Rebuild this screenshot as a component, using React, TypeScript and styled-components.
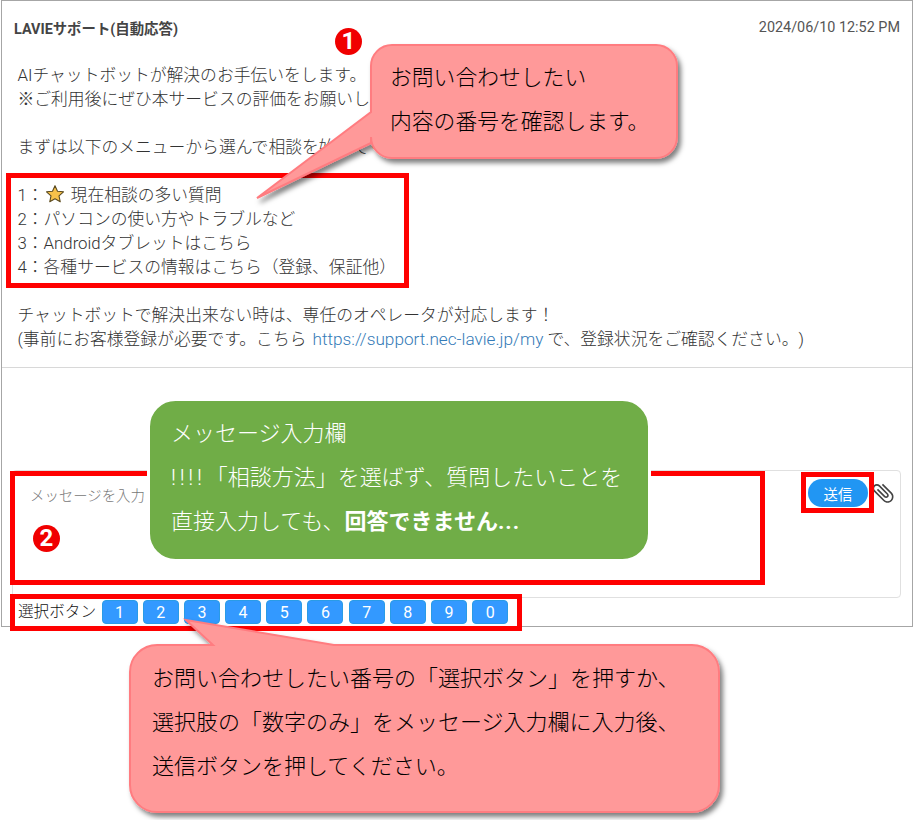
import React from "react";
import styled, { createGlobalStyle } from "styled-components";

const GlobalStyle = createGlobalStyle`
  html, body {
    margin: 0;
    padding: 0;
    background: #fff;
  }
  body {
    font-family: Roboto, "Noto Sans CJK JP", sans-serif;
    text-spacing-trim: space-all;
  }
`;

const Page = styled.div`
  position: relative;
  width: 913px;
  height: 820px;
  overflow: hidden;
`;

const Panel = styled.div`
  width: 912px;
  height: 627px;
  margin-left: 1px;
  box-sizing: border-box;
  border: 1px solid #a6a6a6;
  display: flex;
  flex-direction: column;
`;

const Message = styled.section`
  height: 367px;
  box-sizing: border-box;
  border-bottom: 1px solid #d8d8d8;
  padding: 16px 12px 0 12px;
`;

const MessageHead = styled.header`
  display: flex;
  justify-content: space-between;
  align-items: center;
  height: 20px;
`;

const Sender = styled.span`
  font-size: 14.4px;
  font-weight: 700;
  color: #444;
`;

const Stamp = styled.span`
  font-size: 14.4px;
  color: #555;
`;

const Body = styled.div`
  margin-top: 26px;
  padding-left: 3.5px;
  font-size: 16.8px;
  line-height: 24px;
  font-weight: 300;
  color: #333;
`;

const Line = styled.div`
  height: 24px;
  white-space: nowrap;
`;

const Link = styled.a`
  color: #337ab7;
  font-size: 17.2px;
  margin-left: 2px;
  text-decoration: none;
`;

const Star = styled.svg`
  width: 20px;
  height: 20px;
  vertical-align: -3px;
  margin: 0 6px 0 1px;
`;

const Composer = styled.div`
  margin: 102px 11px 0 10px;
  height: 128px;
  box-sizing: border-box;
  border: 1px solid #e0e0e0;
  border-radius: 4px;
  padding: 13px 4px 0 17px;
  display: flex;
  align-items: flex-start;
  justify-content: space-between;
`;

const Placeholder = styled.span`
  font-size: 14.4px;
  font-weight: 300;
  line-height: 26px;
  color: #777;
`;

const SendGroup = styled.div`
  display: flex;
  align-items: center;
  gap: 2px;
  margin-top: -5px;
`;

const SendButton = styled.button`
  width: 60px;
  height: 28px;
  border: 0;
  border-radius: 14px;
  background: #2196f3;
  color: #fff;
  font-family: inherit;
  font-size: 14.4px;
  padding: 0;
`;

const ClipIcon = styled.svg`
  width: 26px;
  height: 26px;
  display: block;
`;

const Choices = styled.div`
  display: flex;
  align-items: center;
  height: 24px;
  margin: 2px 0 0 16px;
`;

const ChoiceLabel = styled.span`
  font-size: 15.6px;
  font-weight: 300;
  color: #111;
  width: 83.5px;
  line-height: 24px;
  height: 24px;
  white-space: nowrap;
`;

const ChoiceList = styled.div`
  display: flex;
  gap: 5.2px;
`;

const ChoiceButton = styled.button`
  width: 36px;
  height: 24px;
  box-sizing: border-box;
  border: 1px solid #2a9be6;
  border-radius: 4px;
  background: #3399ff;
  color: #fff;
  font-family: inherit;
  font-size: 16px;
  padding: 0;
`;

const Frame = styled.div<{ $x: number; $y: number; $w: number; $h: number }>`
  position: absolute;
  left: ${({ $x }) => $x}px;
  top: ${({ $y }) => $y}px;
  width: ${({ $w }) => $w}px;
  height: ${({ $h }) => $h}px;
  box-sizing: border-box;
  border: 5px solid #ff0000;
`;

const Badge = styled.div<{ $x: number; $y: number }>`
  position: absolute;
  left: ${({ $x }) => $x}px;
  top: ${({ $y }) => $y}px;
  width: 27px;
  height: 27px;
  border-radius: 50%;
  background: #f00000;
  color: #fff;
  font-size: 24px;
  font-weight: 700;
  line-height: 27px;
  text-align: center;
`;

const CalloutShape = styled.svg`
  position: absolute;
  left: 0;
  top: 0;
  overflow: visible;
  pointer-events: none;
`;

const CalloutText = styled.div<{ $x: number; $y: number; $color: string; $size: number }>`
  position: absolute;
  left: ${({ $x }) => $x}px;
  top: ${({ $y }) => $y}px;
  font-size: ${({ $size }) => $size}px;
  line-height: 44px;
  font-weight: 300;
  white-space: nowrap;
  color: ${({ $color }) => $color};

  b {
    font-weight: 700;
  }
`;

const Bangs = styled.span`
  letter-spacing: 3.7px;
`;

const Dots = styled.span`
  letter-spacing: 1px;
`;

const numbers = ["1", "2", "3", "4", "5", "6", "7", "8", "9", "0"];

export default function App(): React.ReactElement {
  return (
    <Page>
      <GlobalStyle />
      <Panel>
        <Message>
          <MessageHead>
            <Sender>LAVIEサポート(自動応答)</Sender>
            <Stamp>2024/06/10 12:52 PM</Stamp>
          </MessageHead>
          <Body>
            <Line>AIチャットボットが解決のお手伝いをします。</Line>
            <Line>※ご利用後にぜひ本サービスの評価をお願いします。</Line>
            <Line />
            <Line>まずは以下のメニューから選んで相談を始めてください。</Line>
            <Line />
            <Line>
              1：
              <Star viewBox="0 0 24 24">
                <path
                  d="M12 2l3 6.6 7.2.8-5.4 4.8 1.5 7.1L12 17.7l-6.3 3.6 1.5-7.1L1.8 9.4 9 8.6z"
                  fill="#f8c24a"
                  stroke="#5a4a20"
                  strokeWidth="1.3"
                  strokeLinejoin="round"
                />
              </Star>
              現在相談の多い質問
            </Line>
            <Line>2：パソコンの使い方やトラブルなど</Line>
            <Line>3：Androidタブレットはこちら</Line>
            <Line>4：各種サービスの情報はこちら（登録、保証他）</Line>
            <Line />
            <Line>チャットボットで解決出来ない時は、専任のオペレータが対応します！</Line>
            <Line>
              (事前にお客様登録が必要です。こちら <Link>https://support.nec-lavie.jp/my</Link> で、登録状況をご確認ください。)
            </Line>
          </Body>
        </Message>
        <Composer>
          <Placeholder>メッセージを入力</Placeholder>
          <SendGroup>
            <SendButton>送信</SendButton>
            <ClipIcon viewBox="0 0 24 24">
              <g transform="rotate(-45 12 12)">
                <path
                  d="M16.5 6v11.5c0 2.21-1.79 4-4 4s-4-1.79-4-4V5c0-1.38 1.12-2.5 2.5-2.5s2.5 1.12 2.5 2.5v10.5c0 .55-.45 1-1 1s-1-.45-1-1V6H10v9.5c0 1.38 1.12 2.5 2.5 2.5s2.5-1.12 2.5-2.5V5c0-2.21-1.79-4-4-4S7 2.79 7 5v12.5c0 3.04 2.46 5.5 5.5 5.5s5.5-2.46 5.5-5.5V6h-1.5z"
                  fill="#444"
                />
              </g>
            </ClipIcon>
          </SendGroup>
        </Composer>
        <Choices>
          <ChoiceLabel>選択ボタン</ChoiceLabel>
          <ChoiceList>
            {numbers.map((n) => (
              <ChoiceButton key={n}>{n}</ChoiceButton>
            ))}
          </ChoiceList>
        </Choices>
      </Panel>

      <Frame $x={6} $y={173} $w={403} $h={115} />
      <Frame $x={10} $y={471} $w={755} $h={114} />
      <Frame $x={801} $y={472} $w={73} $h={41} />
      <Frame $x={10} $y={594} $w={512} $h={37} />

      <Badge $x={335} $y={28}>1</Badge>
      <Badge $x={33} $y={525}>2</Badge>

      <CalloutShape width="913" height="820">
        <defs>
          <filter id="drop" x="-20%" y="-20%" width="140%" height="140%">
            <feDropShadow dx="3" dy="4" stdDeviation="2.5" floodColor="#000" floodOpacity="0.5" />
          </filter>
        </defs>
        <path
          d="M392 45H656a21 21 0 0 1 21 21V137a21 21 0 0 1-21 21H392a21 21 0 0 1-21-21V143L257 198L371 112V66a21 21 0 0 1 21-21Z"
          fill="#ff9999"
          stroke="#ff7c80"
          strokeWidth="2"
          filter="url(#drop)"
        />
        <rect x="148.5" y="399.5" width="501" height="161" rx="27" fill="#70ad47" stroke="#fff" strokeWidth="3" />
        <path
          d="M157 645H213L186 620L334 645H692a27 27 0 0 1 27 27V785a27 27 0 0 1-27 27H157a27 27 0 0 1-27-27V672a27 27 0 0 1 27-27Z"
          fill="#ff9999"
          stroke="#ff7c80"
          strokeWidth="2"
          filter="url(#drop)"
        />
      </CalloutShape>

      <CalloutText $x={390} $y={56} $color="#000" $size={21.8}>
        お問い合わせしたい
        <br />
        内容の番号を確認します。
      </CalloutText>
      <CalloutText $x={171} $y={412} $color="#fff" $size={22}>
        メッセージ入力欄
        <br />
        <Bangs>!!!!</Bangs>「相談方法」を選ばず、質問したいことを
        <br />
        直接入力しても、<b>回答できません<Dots>...</Dots></b>
      </CalloutText>
      <CalloutText $x={152} $y={657} $color="#000" $size={22}>
        お問い合わせしたい番号の「選択ボタン」を押すか、
        <br />
        選択肢の「数字のみ」をメッセージ入力欄に入力後、
        <br />
        送信ボタンを押してください。
      </CalloutText>
    </Page>
  );
}
